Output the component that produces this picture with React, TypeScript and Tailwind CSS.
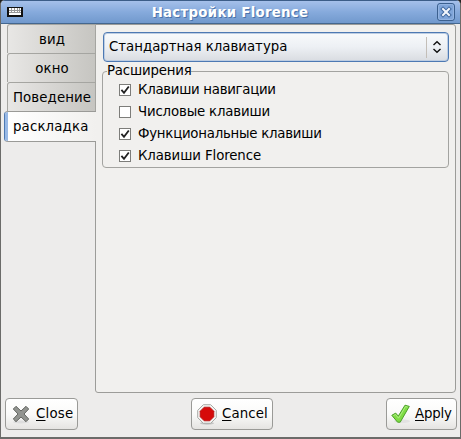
import React, { useState } from "react";

const tabs = ["вид", "окно", "Поведение", "раскладка"];

const options = [
  { label: "Клавиши навигации", initial: true, tracking: "tracking-[-0.3px]" },
  { label: "Числовые клавиши", initial: false, tracking: "tracking-[-0.17px]" },
  { label: "Функциональные клавиши", initial: true, tracking: "tracking-[-0.25px]" },
  { label: "Клавиши Florence", initial: true, tracking: "tracking-[-0.1px]" },
];

function KeyboardIcon() {
  return (
    <svg width="16" height="10" viewBox="0 0 16 10" shapeRendering="crispEdges">
      <rect x="0" y="0" width="16" height="10" rx="1" fill="#111" />
      <rect x="2" y="1" width="12" height="7" fill="#fff" />
      <path d="M2 3.5h12M2 5.5h12" stroke="#999" strokeWidth="1" />
      <path d="M4.5 1v5M7.5 1v5M10.5 1v5M12.5 1v5" stroke="#999" strokeWidth="1" />
    </svg>
  );
}

function CloseGlyph() {
  return (
    <svg width="18" height="18" viewBox="0 0 18 18">
      <rect x="0.5" y="0.5" width="17" height="17" rx="2.5" fill="#7fa5d9" stroke="#3b608f" />
      <rect x="1.5" y="1.5" width="15" height="15" rx="2" fill="none" stroke="#94b4e1" />
      <path d="M6 6l6 6M12 6l-6 6" stroke="#41699f" strokeWidth="4" strokeLinecap="square" />
      <path d="M6 6l6 6M12 6l-6 6" stroke="#f3f7fd" strokeWidth="2" strokeLinecap="square" />
    </svg>
  );
}

function CrossIcon() {
  return (
    <svg width="20" height="20" viewBox="0 0 20 20">
      <ellipse cx="10" cy="18" rx="8" ry="1.5" fill="#ddd" />
      <path
        d="M5 2.3L10 7l5-4.7L17.7 5 13 10l4.7 5-2.7 2.7L10 13l-5 4.7L2.3 15 7 10 2.3 5z"
        fill="#929490"
        stroke="#646662"
        strokeLinejoin="round"
      />
    </svg>
  );
}

function StopIcon() {
  return (
    <svg width="20" height="21" viewBox="0 0 20 21">
      <ellipse cx="10" cy="19.2" rx="7" ry="1.5" fill="#c4c4c4" />
      <path d="M6.3.7h7.4l5.6 5.6v7.4l-5.6 5.6H6.3L.7 13.7V6.3z" fill="#f3f3f1" stroke="#a9aba7" />
      <path d="M7.2 3.2h5.6l4 4v5.6l-4 4H7.2l-4-4V7.2z" fill="#d60a0a" stroke="#b30c0c" strokeWidth="0.8" />
    </svg>
  );
}

function ApplyIcon() {
  return (
    <svg width="20" height="20" viewBox="0 0 20 20">
      <ellipse cx="11" cy="17.3" rx="8" ry="1.8" fill="#e2e2e2" />
      <path
        d="M.8 11.3l3.9-2.2 2.6 3L14 1.2l4.3 1.2L9.2 18.2H6.6z"
        fill="#7fdc45"
        stroke="#4da02a"
        strokeLinejoin="round"
      />
      <path d="M2.5 11.6l2-1.1 3 3.7L14.6 2.5l2 .6" fill="none" stroke="#b5ef8c" strokeWidth="0.9" />
    </svg>
  );
}

function Check({ label, initial, tracking }: { label: string; initial: boolean; tracking: string }) {
  const [on, setOn] = useState(initial);
  return (
    <button
      type="button"
      role="checkbox"
      aria-checked={on}
      onClick={() => setOn(!on)}
      className="flex h-[22px] items-center text-left"
    >
      <span className="mr-[7px] flex size-3 shrink-0 items-center justify-center border border-[#7d7d7a] bg-white">
        {on && (
          <svg width="10" height="10" viewBox="0 0 10 10" className="shrink-0">
            <path d="M1.4 4.8l2.6 3.1L8.8 1.5" fill="none" stroke="#222" strokeWidth="1.8" />
          </svg>
        )}
      </span>
      <span className={`${tracking} whitespace-nowrap`}>{label}</span>
    </button>
  );
}

function ActionButton({
  width,
  tracking,
  icon,
  label,
}: {
  width: string;
  tracking: string;
  icon: React.ReactNode;
  label: string;
}) {
  return (
    <button
      type="button"
      className={`${width} flex h-8 items-center rounded-[4px] border border-[#9a9a97] bg-linear-to-b from-white via-[#fafaf9] to-[#e5e4e2]`}
    >
      {icon}
      <span className={`${tracking} whitespace-nowrap`}>
        <span className="underline underline-offset-2">{label[0]}</span>
        {label.slice(1)}
      </span>
    </button>
  );
}

export default function App() {
  const [active, setActive] = useState(3);
  return (
    <div className="h-[439px] w-[461px] bg-[#222]">
      <div className="flex h-full flex-col overflow-hidden rounded-t-[5px] border-x border-b-2 border-[#6b6b69] bg-[#edeceb] font-['DejaVu_Sans',sans-serif] text-[13.33px] leading-4 text-black">
        <header className="flex h-6 shrink-0 items-center border-t border-b border-t-[#3c5d88] border-b-[#44678f] bg-linear-to-b from-[#a5c0ea] via-[#86aadc] to-[#7199cd] pl-[6px] pr-[5px]">
          <KeyboardIcon />
          <h1 className="grow pt-px text-center text-[13.33px] font-bold tracking-[0.28px] text-white [text-shadow:1px_1px_0_#4b73a9]">
            Настройки Florence
          </h1>
          <button type="button" aria-label="close">
            <CloseGlyph />
          </button>
        </header>

        <div className="flex h-[369px] shrink-0 pr-[4px] pl-[3px]">
          <nav className="z-10 -mr-px flex w-[92px] shrink-0 flex-col items-end">
            {tabs.map((tab, i) =>
              i === active ? (
                <button
                  key={tab}
                  type="button"
                  onClick={() => setActive(i)}
                  className="flex h-[31px] w-[92px] items-stretch overflow-hidden rounded-l-[4px] border-y border-l border-y-[#9a9a97] border-l-[#4d79b3]"
                >
                  <span className="w-[3px] shrink-0 bg-[#98b9e6]" />
                  <span className="grow bg-linear-to-r from-white to-[#f1f0ee] pt-[7px] pl-[5px] text-left tracking-[0.15px] whitespace-nowrap">
                    {tab}
                  </span>
                </button>
              ) : (
                <button
                  key={tab}
                  type="button"
                  onClick={() => setActive(i)}
                  className="h-[29px] w-[89px] rounded-tl-[3px] border-t border-r border-l border-[#a5a5a1] bg-linear-to-r from-[#e8e7e5] to-[#c6c5c1] pt-px pl-px tracking-[0.1px]"
                >
                  {tab}
                </button>
              ),
            )}
          </nav>

          <main className="min-w-0 grow rounded-br-[4px] rounded-tr-[3px] rounded-bl-[3px] border border-[#9c9c99] bg-[#f1f0ee] px-[6px] pt-[7px]">
            <button
              type="button"
              className="ml-px flex h-[30px] w-[346px] items-center rounded-[4px] border border-[#4d79b3] bg-linear-to-b from-[#f8fafc] via-[#edf0f4] to-[#d9dce1] pl-[5px] shadow-[inset_0_0_0_1px_#bdcde2]"
            >
              <span className="grow text-left whitespace-nowrap">Стандартная клавиатура</span>
              <span className="h-[21px] w-px bg-[#c3beb8]" />
              <svg width="21" height="14" viewBox="0 0 21 14">
                <path d="M6.5 5L10 1.7 13.5 5M6.5 9l3.5 3.3L13.5 9" fill="none" stroke="#111" strokeWidth="1.4" />
              </svg>
            </button>

            <fieldset className="mt-px h-[105px] w-[347px] min-w-0 rounded-[4px] border border-[#a3a3a0] pl-4">
              <legend className="-ml-3 h-4 tracking-[-0.2px] whitespace-nowrap">Расширения</legend>
              <div className="flex flex-col items-start">
                {options.map((option) => (
                  <Check key={option.label} {...option} />
                ))}
              </div>
            </fieldset>
          </main>
        </div>

        <footer className="mt-[5px] flex justify-between pr-[3px] pl-[4px]">
          <ActionButton width="w-[73px] pl-[5px]" tracking="ml-[5px] tracking-[0.2px]" icon={<CrossIcon />} label="Close" />
          <ActionButton width="w-[82px] pl-[5px]" tracking="ml-[5px] tracking-[0.1px]" icon={<StopIcon />} label="Cancel" />
          <ActionButton width="w-[71px] pl-[4px]" tracking="ml-[4px] tracking-[-0.2px]" icon={<ApplyIcon />} label="Apply" />
        </footer>
      </div>
    </div>
  );
}
